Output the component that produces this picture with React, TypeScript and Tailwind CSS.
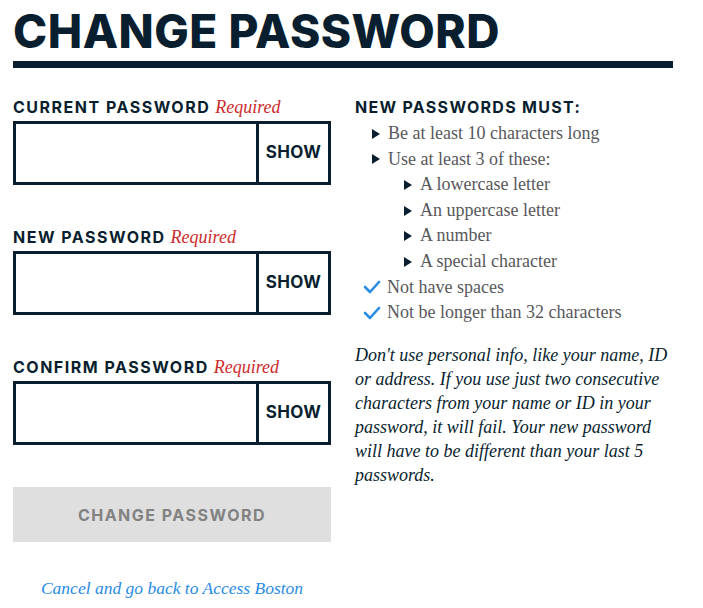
import React from "react";

const sans = { fontFamily: "Inter, 'Liberation Sans', sans-serif" };
const serif = { fontFamily: "'Liberation Serif', serif" };

function Tri() {
  return (
    <svg width="8" height="10" viewBox="0 0 8 10" className="shrink-0">
      <polygon points="0,0 8,5 0,10" fill="#091f2f" />
    </svg>
  );
}

function Check() {
  return (
    <svg width="18" height="14" viewBox="0 0 18 14" className="shrink-0">
      <polyline points="2,7 7,12 16,2" fill="none" stroke="#288be4" strokeWidth="2.6" strokeLinecap="round" strokeLinejoin="round" />
    </svg>
  );
}

function Field({ label }: { label: string }) {
  return (
    <div className="flex flex-col">
      <div className="flex items-baseline gap-[5px] h-[24px]">
        <span className="text-[16px] leading-[20px] font-bold tracking-[1.5px] text-[#091f2f]" style={sans}>{label}</span>
        <span className="text-[18px] leading-[20px] italic text-[#cb2b2b]" style={serif}>Required</span>
      </div>
      <div className="flex h-[64px] w-[318px] border-[3px] border-[#091f2f]">
        <div className="flex-1" />
        <div className="w-[72px] border-l-[3px] border-[#091f2f] flex items-center justify-center text-[17px] tracking-[0.3px] font-bold text-[#091f2f]" style={sans}>SHOW</div>
      </div>
    </div>
  );
}

export default function App() {
  return (
    <div className="bg-white w-[703px] h-[608px] pl-[13px] pt-[5px]">
      <h1 className="text-[46px] leading-[52px] tracking-[0.5px] font-extrabold text-[#091f2f]" style={sans}>CHANGE PASSWORD</h1>
      <div className="w-[660px] h-[7px] bg-[#091f2f] mt-[4px]" />
      <div className="flex mt-[29px]">
        <div className="w-[318px] flex flex-col">
          <Field label="CURRENT PASSWORD" />
          <div className="h-[42px]" />
          <Field label="NEW PASSWORD" />
          <div className="h-[42px]" />
          <Field label="CONFIRM PASSWORD" />
          <div className="mt-[42px] h-[55px] bg-[#dfdfdf] flex items-center justify-center text-[16px] font-bold tracking-[1.5px] text-[#828282]" style={sans}>CHANGE PASSWORD</div>
          <div className="mt-[34px] text-center text-[17.5px] leading-[24px] italic text-[#288be4]" style={serif}>Cancel and go back to Access Boston</div>
        </div>
        <div className="ml-[24px] flex flex-col">
          <div className="text-[16px] leading-[20px] font-bold tracking-[1.3px] text-[#091f2f] h-[24px]" style={sans}>NEW PASSWORDS MUST:</div>
          <div className="flex flex-col text-[18px] leading-[25.6px] text-[#58585b]" style={serif}>
            <div className="flex items-center gap-[8px] pl-[17px]"><Tri />Be at least 10 characters long</div>
            <div className="flex items-center gap-[8px] pl-[17px]"><Tri />Use at least 3 of these:</div>
            <div className="flex items-center gap-[8px] pl-[49px]"><Tri />A lowercase letter</div>
            <div className="flex items-center gap-[8px] pl-[49px]"><Tri />An uppercase letter</div>
            <div className="flex items-center gap-[8px] pl-[49px]"><Tri />A number</div>
            <div className="flex items-center gap-[8px] pl-[49px]"><Tri />A special character</div>
            <div className="flex items-center gap-[6px] pl-[8px]"><Check />Not have spaces</div>
            <div className="flex items-center gap-[6px] pl-[8px]"><Check />Not be longer than 32 characters</div>
          </div>
          <p className="mt-[17px] w-[322px] text-[18px] leading-[24px] italic text-[#091f2f]" style={serif}>
            Don't use personal info, like your name, ID or address. If you use just two consecutive characters from your name or ID in your password, it will fail. Your new password will have to be different than your last 5 passwords.
          </p>
        </div>
      </div>
    </div>
  );
}
